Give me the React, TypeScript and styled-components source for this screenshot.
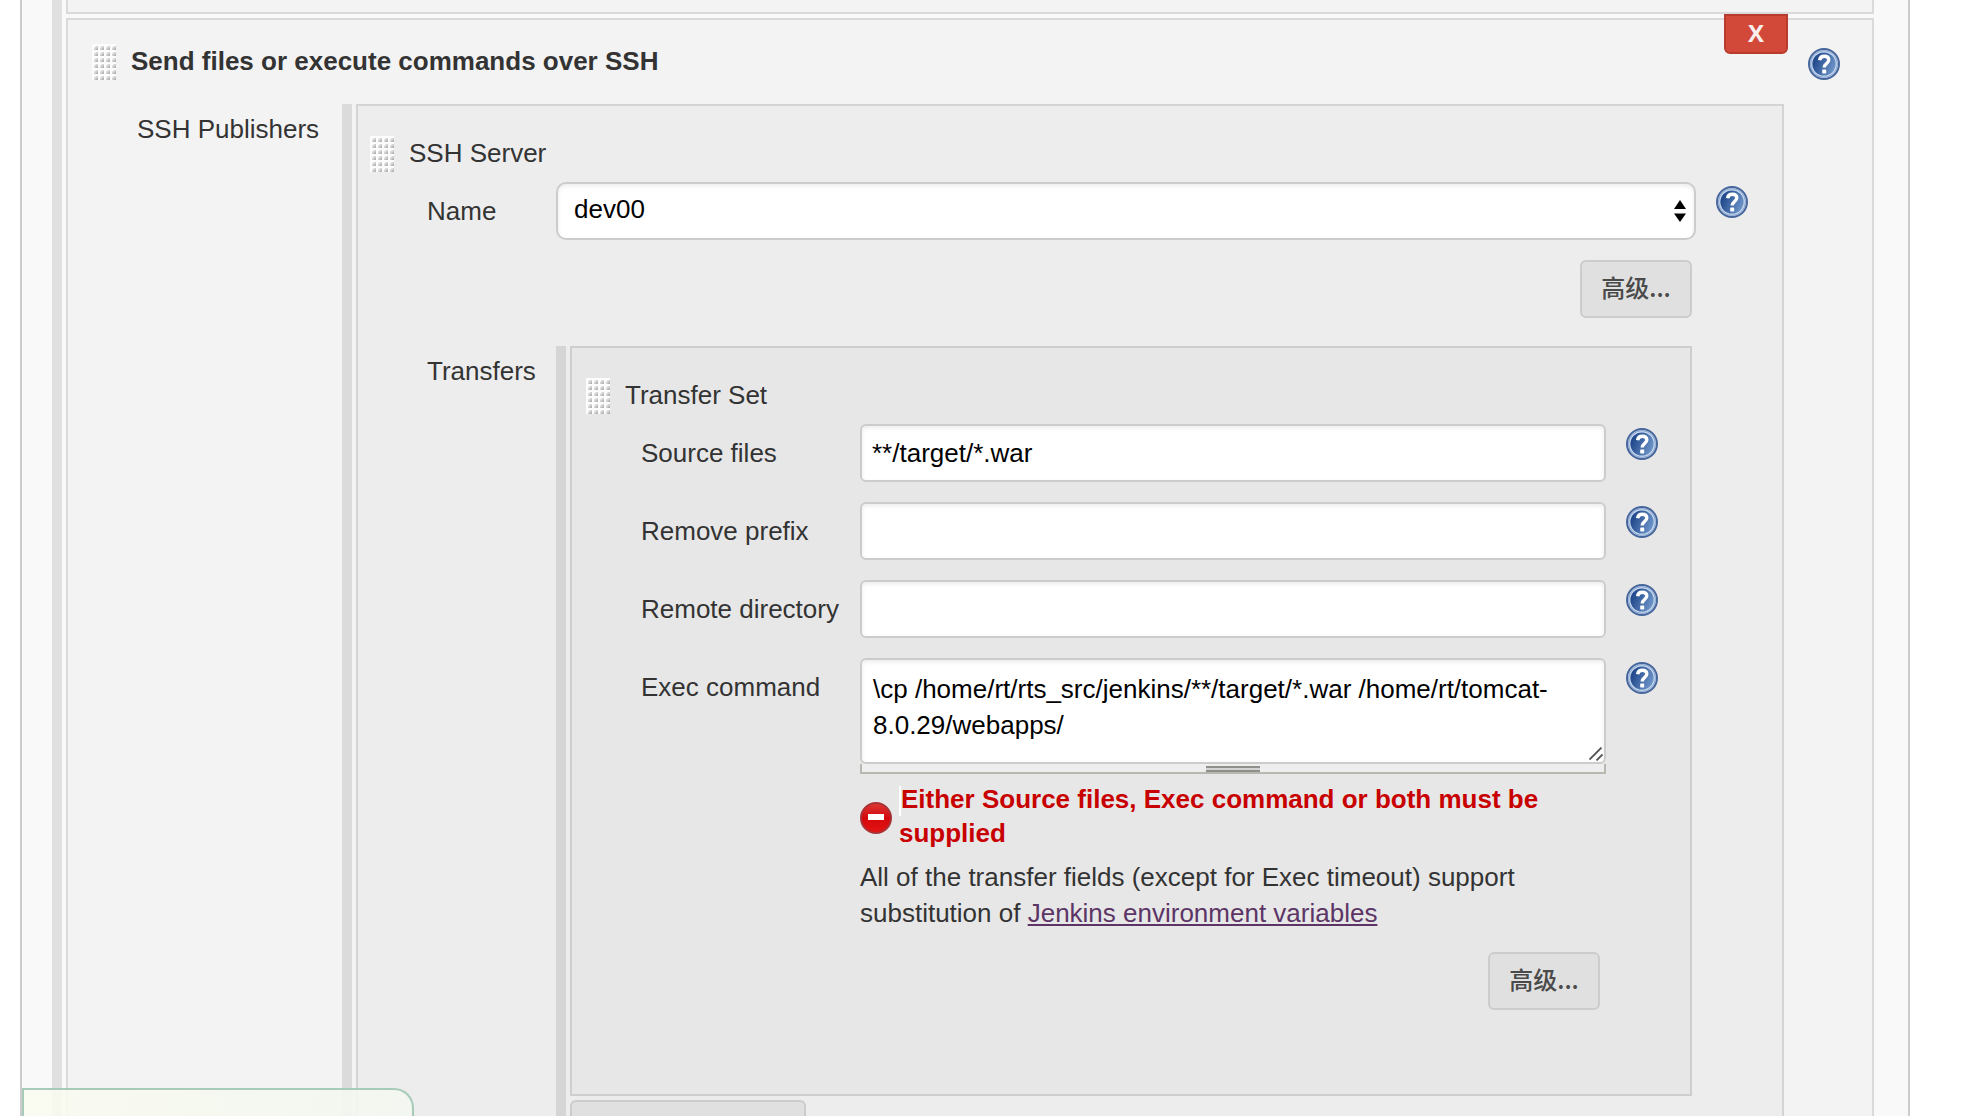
import React from "react";
import styled, { createGlobalStyle } from "styled-components";

const Global = createGlobalStyle`
  *, *::before, *::after { box-sizing: border-box; }
  body { margin: 0; background: #fff; }
  body, button, input, select, textarea {
    font-family: "Liberation Sans", "Noto Sans CJK SC", sans-serif;
    font-size: 26px;
    line-height: 34px;
  }
  body { color: #333; }
`;

const Viewport = styled.div`
  height: 100vh;
  overflow-y: auto;
  scrollbar-width: none;
`;

const Page = styled.main`
  min-height: 100%;
  margin: 0 66px 0 20px;
  padding: 0 34px 0 30px;
  border: solid #ccc;
  border-width: 0 2px;
  background: #f9f9f9;
`;

const Repeatable = styled.div<{ $bar: string }>`
  display: flex;
  flex-direction: column;
  align-items: stretch;
  gap: 4px;
  min-width: 0;
  padding-left: 4px;
  border-left: 10px solid ${(p) => p.$bar};
`;

const Chunk = styled.section<{ $bg: string; $line: string; $bottom: number }>`
  position: relative;
  padding-bottom: ${(p) => p.$bottom}px;
  border: 2px solid ${(p) => p.$line};
  background: ${(p) => p.$bg};
`;

const PreviousChunk = styled.div`
  height: 14px;
  border: solid #dadada;
  border-width: 0 2px 2px;
  background: #f3f3f3;
`;

const ChunkHead = styled.header<{ $pad: string }>`
  display: flex;
  gap: 15px;
  padding: ${(p) => p.$pad};
`;

const Title = styled.h2<{ $bold?: boolean }>`
  flex: 1;
  margin: 0;
  font-size: 26px;
  line-height: 34px;
  font-weight: ${(p) => (p.$bold ? 700 : 400)};
`;

const NestedRow = styled.div<{ $label: number; $right: number }>`
  display: grid;
  grid-template-columns: ${(p) => p.$label}px minmax(0, 1fr);
  padding-right: ${(p) => p.$right}px;
`;

const NestedLabel = styled.div`
  padding: 8px 0 0 69px;
  white-space: nowrap;
`;

const FieldRow = styled.div<{ $label: number; $right: number }>`
  display: grid;
  grid-template-columns: ${(p) => p.$label}px minmax(0, 1fr) 32px;
  align-items: start;
  margin-bottom: 20px;
  padding-right: ${(p) => p.$right}px;
`;

const FieldLabel = styled.label`
  padding: 12px 0 0 69px;
  white-space: nowrap;
`;

const Control = styled.div`
  position: relative;
  margin-right: 20px;
`;

const TextInput = styled.input`
  display: block;
  width: 100%;
  height: 58px;
  padding: 0 10px;
  border: 2px solid #ccc;
  border-radius: 6px;
  background: #fff;
  box-shadow: inset 0 2px 4px rgba(0, 0, 0, 0.08);
  color: #000;
`;

const Select = styled.select`
  display: block;
  width: 100%;
  height: 58px;
  padding: 0 40px 4px 16px;
  border: 2px solid #ccc;
  border-radius: 10px;
  appearance: none;
  background: #fff;
  box-shadow: inset 0 2px 4px rgba(0, 0, 0, 0.08);
  color: #000;
`;

const SelectArrows = styled.svg`
  position: absolute;
  right: 10px;
  top: 18px;
  pointer-events: none;
`;

const TextArea = styled.textarea`
  display: block;
  width: 100%;
  height: 106px;
  padding: 11px 11px 19px;
  overflow: hidden;
  resize: none;
  border: 2px solid #ccc;
  border-radius: 6px;
  background: #fff;
  box-shadow: inset 0 2px 4px rgba(0, 0, 0, 0.08);
  color: #000;
  line-height: 36px;
`;

const AreaBox = styled.div`
  position: relative;
`;

const Grip = styled.svg`
  position: absolute;
  right: 3px;
  bottom: 3px;
  pointer-events: none;
`;

const Splitter = styled.div`
  display: flex;
  justify-content: center;
  height: 10px;
  padding-top: 2px;
  border: solid #b8b8b0;
  border-width: 0 2px 2px;
  background: #eee;

  &::before {
    content: "";
    width: 54px;
    height: 6px;
    border: solid #8f8f8c;
    border-width: 2px 0;
    background: #d4d4d2;
  }
`;

const ErrorMessage = styled.div`
  display: flex;
  align-items: center;
  gap: 7px;
  margin: 8px 0;
  color: #c80000;
  font-weight: 700;

  svg {
    flex: none;
    margin-top: 4px;
  }
`;

const Spacer = styled.span`
  display: inline-block;
  width: 2px;
  height: 30px;
  background: #fff;
  vertical-align: middle;
`;

const Hint = styled.p`
  margin: 0;
  padding: 1px 0;
  line-height: 36px;
`;

const Link = styled.a`
  color: #5c3566;
  text-decoration: underline;
`;

const Actions = styled.div<{ $bottom: number }>`
  display: flex;
  justify-content: flex-end;
  padding: 0 90px ${(p) => p.$bottom}px 0;
`;

const Button = styled.button`
  height: 58px;
  width: 112px;
  padding: 0 0 4px;
  border: 2px solid #ccc;
  border-radius: 6px;
  background: #e0e0e0;
  color: #4a4a4a;
  font-family: "Noto Sans CJK SC", sans-serif;
  font-size: 24px;
  font-weight: 500;
`;

const AddButton = styled(Button)`
  align-self: flex-start;
  width: 236px;
`;

const DeleteButton = styled.button`
  position: absolute;
  top: -6px;
  right: 84px;
  width: 64px;
  height: 40px;
  padding: 0 0 2px;
  border: 2px solid #b93b2d;
  border-radius: 0 0 6px 6px;
  background: #d24939;
  color: #f8eeee;
  font-family: "Open Sans", sans-serif;
  font-size: 24px;
  font-weight: 700;
`;

const IconButton = styled.button`
  display: block;
  width: 32px;
  height: 32px;
  margin: 4px 0 0;
  padding: 0;
  border: 0;
  background: none;

  svg { display: block; }
`;

const StatusBar = styled.div`
  position: fixed;
  left: 22px;
  bottom: 0;
  width: 392px;
  height: 28px;
  border: solid #a8cbb9;
  border-width: 2px 2px 0;
  border-radius: 0 20px 0 0;
  background: linear-gradient(90deg, rgba(249, 251, 240, 0.9), rgba(243, 247, 240, 0.9));
`;

function HelpIcon() {
  return (
    <svg width="32" height="32" viewBox="0 0 32 32" aria-hidden="true">
      <defs>
        <linearGradient id="helpFill" x1="0" y1="0.3" x2="1" y2="0.7">
          <stop offset="0.1" stopColor="#234a8c" />
          <stop offset="1" stopColor="#7098cb" />
        </linearGradient>
      </defs>
      <circle cx="16" cy="16" r="15" fill="#c4d6ee" stroke="#46669c" strokeWidth="2" />
      <circle cx="16" cy="16" r="13.4" fill="none" stroke="#8ba7d0" strokeWidth="1" />
      <circle cx="16" cy="16" r="11.6" fill="url(#helpFill)" />
      <path d="M11.6 12.2C12 9.4 13.8 8.2 16.2 8.2c2.8 0 4.6 1.5 4.6 3.8 0 3.4-4.6 3.6-4.6 7.4" fill="none" stroke="#fff" strokeWidth="3.4" />
      <rect x="14.2" y="21.4" width="4" height="4" rx="0.6" fill="#fff" />
    </svg>
  );
}

function Help({ topic }: { topic: string }) {
  return (
    <IconButton type="button" aria-label={`Help for ${topic}`}>
      <HelpIcon />
    </IconButton>
  );
}

function DragHandle() {
  const dots: React.ReactNode[] = [];
  for (let r = 0; r < 6; r++) {
    for (let c = 0; c < 4; c++) {
      const x = c * 6 + 2;
      const y = r * 6 + 2;
      dots.push(
        <g key={`${r}-${c}`}>
          <path d={`M${x + 4} ${y}v4h-4v-2l2-2z`} fill="#d6d6d6" />
          <path d={`M${x + 4} ${y + 1}v3h-3z`} fill="#b4b4b4" />
        </g>
      );
    }
  }
  return (
    <svg width="24" height="36" viewBox="0 0 24 36" aria-hidden="true">
      <rect width="24" height="36" fill="#fcfcfc" />
      {dots}
    </svg>
  );
}

function ErrorIcon() {
  return (
    <svg width="32" height="32" viewBox="0 0 32 32" aria-hidden="true">
      <defs>
        <linearGradient id="errFill" x1="0" y1="0" x2="0" y2="1">
          <stop offset="0" stopColor="#dc3a36" />
          <stop offset="0.5" stopColor="#d4080c" />
          <stop offset="1" stopColor="#e41412" />
        </linearGradient>
      </defs>
      <circle cx="16" cy="16" r="15" fill="url(#errFill)" stroke="#a83236" strokeWidth="2" />
      <rect x="8" y="12" width="16" height="6" fill="#fff" />
    </svg>
  );
}

function TextField({ id, label, value }: { id: string; label: string; value: string }) {
  return (
    <FieldRow $label={288} $right={32}>
      <FieldLabel htmlFor={id}>{label}</FieldLabel>
      <Control>
        <TextInput id={id} type="text" defaultValue={value} />
      </Control>
      <Help topic={label} />
    </FieldRow>
  );
}

function TransferSet() {
  return (
    <Chunk $bg="#e7e7e7" $line="#cecece" $bottom={84}>
      <ChunkHead $pad="30px 32px 10px 14px">
        <DragHandle />
        <Title>Transfer Set</Title>
      </ChunkHead>
      <TextField id="source" label="Source files" value="**/target/*.war" />
      <TextField id="prefix" label="Remove prefix" value="" />
      <TextField id="remote" label="Remote directory" value="" />
      <FieldRow $label={288} $right={32}>
        <FieldLabel htmlFor="exec">Exec command</FieldLabel>
        <Control>
          <AreaBox>
            <TextArea
              id="exec"
              spellCheck={false}
              defaultValue="\cp /home/rt/rts_src/jenkins/**/target/*.war /home/rt/tomcat-8.0.29/webapps/"
            />
            <Grip width="14" height="14" viewBox="0 0 14 14" aria-hidden="true">
              <path d="M0.5 12.5L12.5 0.5M7.5 13.5L13.5 7.5" stroke="#555" strokeWidth="1.8" />
            </Grip>
          </AreaBox>
          <Splitter />
          <ErrorMessage role="alert">
            <ErrorIcon />
            <span>
              <Spacer />
              Either Source files, Exec command or both must be supplied
            </span>
          </ErrorMessage>
          <Hint>
            All of the transfer fields (except for Exec timeout) support substitution of{" "}
            <Link href="#variables">Jenkins environment variables</Link>
          </Hint>
        </Control>
        <Help topic="Exec command" />
      </FieldRow>
      <Actions $bottom={0}>
        <Button type="button">高级...</Button>
      </Actions>
    </Chunk>
  );
}

function SshServer() {
  return (
    <Chunk $bg="#ededed" $line="#d4d4d4" $bottom={20}>
      <ChunkHead $pad="30px 34px 10px 12px">
        <DragHandle />
        <Title>SSH Server</Title>
      </ChunkHead>
      <FieldRow $label={198} $right={34}>
        <FieldLabel htmlFor="server">Name</FieldLabel>
        <Control>
          <Select id="server" defaultValue="dev00">
            <option>dev00</option>
          </Select>
          <SelectArrows width="12" height="22" viewBox="0 0 12 22" aria-hidden="true">
            <path d="M0 9L6 0l6 9zM0 13.5h12L6 22z" fill="#000" />
          </SelectArrows>
        </Control>
        <Help topic="Name" />
      </FieldRow>
      <Actions $bottom={28}>
        <Button type="button">高级...</Button>
      </Actions>
      <NestedRow $label={198} $right={90}>
        <NestedLabel>Transfers</NestedLabel>
        <Repeatable $bar="#d5d5d5">
          <TransferSet />
          <AddButton type="button" aria-label="Add Transfer Set" />
        </Repeatable>
      </NestedRow>
    </Chunk>
  );
}

export default function App() {
  return (
    <>
      <Global />
      <Viewport>
        <Page>
          <Repeatable $bar="#e0e0e0">
            <PreviousChunk />
            <Chunk $bg="#f3f3f3" $line="#dadada" $bottom={24}>
              <DeleteButton type="button">X</DeleteButton>
              <ChunkHead $pad="24px 32px 24px 24px">
                <DragHandle />
                <Title $bold>Send files or execute commands over SSH</Title>
                <Help topic="Send files or execute commands over SSH" />
              </ChunkHead>
              <NestedRow $label={274} $right={88}>
                <NestedLabel>SSH Publishers</NestedLabel>
                <Repeatable $bar="#dbdbdb">
                  <SshServer />
                </Repeatable>
              </NestedRow>
            </Chunk>
          </Repeatable>
        </Page>
        <StatusBar />
      </Viewport>
    </>
  );
}
